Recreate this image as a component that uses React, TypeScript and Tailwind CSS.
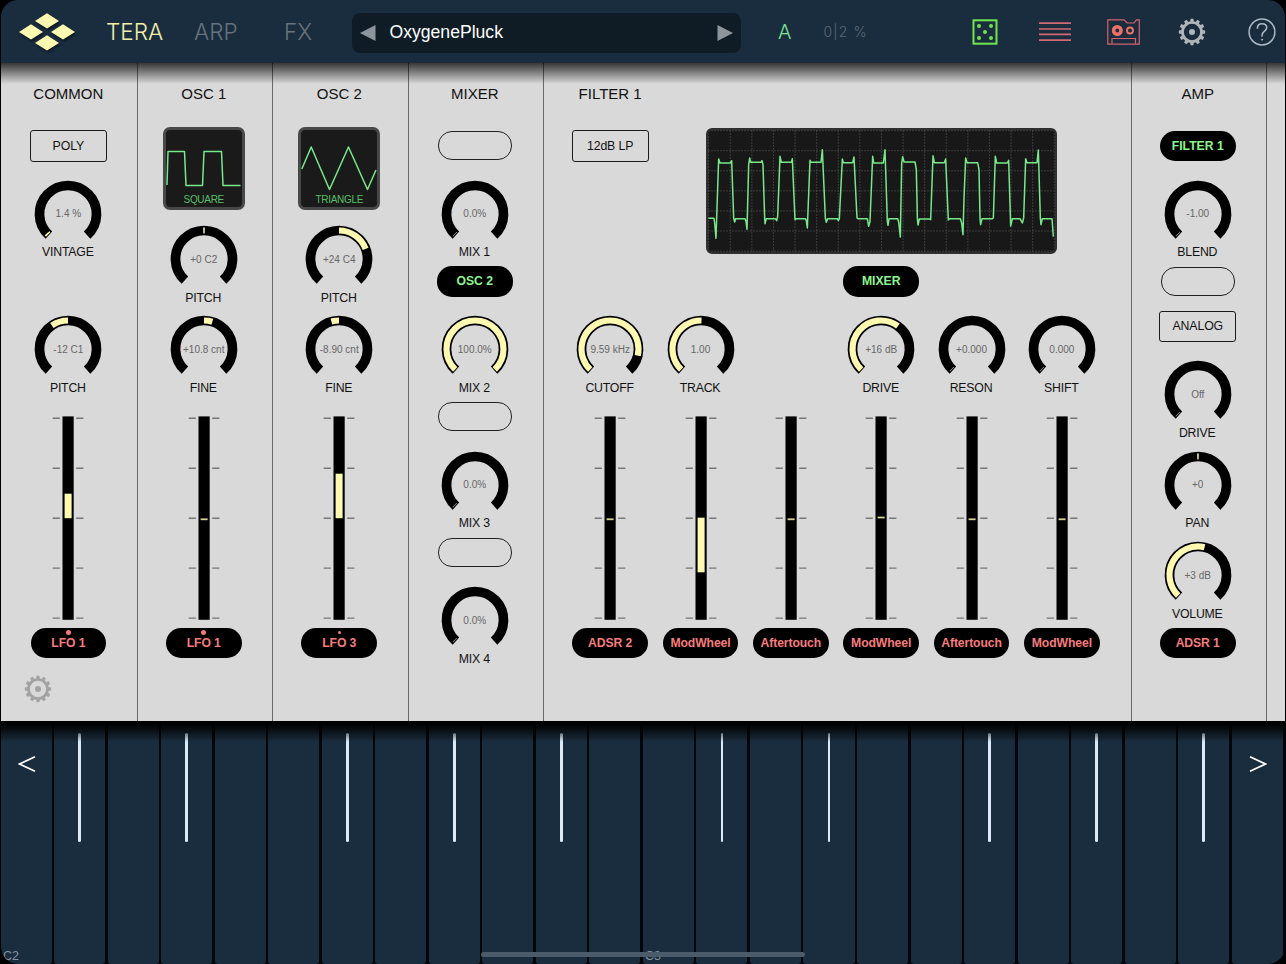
import { ReactNode } from "react";

const YELLOW = "#fdf9b0";
const GREEN = "#78e88a";
const MAX = 138;

const polar = (angle: number, r: number) => {
  const rad = (angle * Math.PI) / 180;
  return `${(35 + r * Math.sin(rad)).toFixed(2)} ${(35 - r * Math.cos(rad)).toFixed(2)}`;
};

const arc = (from: number, to: number, r = 28.5) =>
  `M${polar(from, r)}A${r} ${r} 0 ${to - from > 180 ? 1 : 0} 1 ${polar(to, r)}`;

type KnobProps = { label: string; value: string; from?: number; to?: number; empty?: boolean };

const Knob = ({ label, value, from = 0, to = 0, empty }: KnobProps) => (
  <div className="relative flex h-[90.35px] w-full shrink-0 flex-col items-center pt-[10.2px]">
    <svg className="shrink-0" width="70" height="70" viewBox="0 0 70 70" fill="none">
      <path d={arc(-MAX, MAX)} stroke="#000" strokeWidth="9.7" />
      {empty ? (
        <path d={arc(-135.8, -134.4)} stroke="#a5a59a" strokeWidth="6" />
      ) : (
        <path d={arc(from, to)} stroke={YELLOW} strokeWidth="6.2" />
      )}
    </svg>
    <span className="absolute top-[39px] left-0 w-full text-center text-[10px] leading-[14px] text-[#666]">{value}</span>
    <span className="-mt-[4.3px] shrink-0 pr-[1px] text-[12.3px] leading-[16px] tracking-[-0.2px]">{label}</span>
  </div>
);

const Slider = ({ top = 124.4, height = 1.8 }: { top?: number; height?: number }) => (
  <svg className="h-[225.85px] shrink-0" width="60" viewBox="0 0 60 225.85">
    {[24.2, 74.2, 124.2, 174.1, 224.1].map((y) => (
      <path key={y} d={`M14.7 ${y}h7.2M38.2 ${y}h7.2`} stroke="#777" strokeWidth="1.4" />
    ))}
    <rect x="24.5" y="22.4" width="11.2" height="203.4" fill="#000" />
    <rect x="26.6" y={top} width="7" height={height} fill={height < 3 ? "#d6d294" : YELLOW} />
  </svg>
);

const Cell = ({ children }: { children?: ReactNode }) => (
  <div className="flex h-[45.17px] w-full shrink-0 items-center justify-center">{children}</div>
);

const Pill = ({ children, red, dot }: { children: string; red?: boolean; dot?: "lg" | "sm" }) => (
  <Cell>
    <div
      className={`relative flex h-[30.4px] w-[75.6px] items-center justify-center rounded-[15px] bg-black text-[12.2px] font-bold ${
        red ? "tracking-[-0.1px] text-[#f67c7c]" : "text-[#8df58f]"
      }`}
    >
      {dot === "lg" && <i className="absolute top-[2.5px] left-[35.3px] size-[5px] rounded-full bg-[#f67c7c]" />}
      {dot === "sm" && <i className="absolute top-[3.5px] left-[36.3px] size-[3px] rounded-full bg-[#f67c7c]" />}
      <span className="relative">{children}</span>
    </div>
  </Cell>
);

const Slot = () => (
  <Cell>
    <div className="h-[29px] w-[74.4px] rounded-[14px] border-[1.3px] border-[#222]" />
  </Cell>
);

const BoxButton = ({ children }: { children: string }) => (
  <Cell>
    <div className="flex h-[31.7px] w-[77px] items-center justify-center rounded-[3px] border-[1.4px] border-[#1c1c1c] text-[12.3px] tracking-[-0.1px]">
      {children}
    </div>
  </Cell>
);

const Wave = ({ name, d }: { name: string; d: string }) => (
  <div className="flex h-[90.35px] w-full shrink-0 items-center justify-center">
    <div className="flex h-[82.4px] w-[82.4px] flex-col items-center rounded-[7px] border-[3px] border-[#484848] bg-[#1a1a1a]">
      <svg className="h-[63px]" width="76.4" viewBox="0 0 76.4 63" fill="none">
        <path d={d} stroke={GREEN} strokeWidth="1.5" strokeLinejoin="round" />
      </svg>
      <span className="text-[10px] leading-[13px] tracking-[-0.3px] text-[#58bf68]">{name}</span>
    </div>
  </div>
);

const Column = ({ title, first, children }: { title: string; first?: boolean; children: ReactNode }) => (
  <section
    className={`flex shrink-0 flex-col items-center border-r border-[#6a6a6a] ${
      first ? "w-[136.7px] pr-[1px]" : "w-[135.5px] pr-[2.4px]"
    }`}
  >
    <h2 className="flex h-[60.3px] shrink-0 items-center pt-[2.5px] text-[15px]">{title}</h2>
    {children}
  </section>
);

const Gear = ({ color }: { color: string }) => (
  <svg width="28" height="28" viewBox="-14 -14 28 28" fill="none">
    <circle r="9.5" stroke={color} strokeWidth="2.7" />
    {Array.from({ length: 12 }, (_, i) => (
      <path key={i} d="M-1.9 -10L-1.5 -13.2H1.5L1.9 -10Z" fill={color} transform={`rotate(${i * 30})`} />
    ))}
    <circle r="3" fill={color} />
  </svg>
);

// drawn in thirds of a pixel
const trace =
  "M7 271H24L26 285L30 331L34 210L38 93L42 105H73L77 98L83 270L86 282L89 272H117L120 280L123 304L128 110L131 90L134 103H165L168 98L171 110L176 270L177 287L181 272H208L212 278L215 265L222 85L226 103H256L259 92L267 275L270 272H298L301 278L304 300L312 97L315 103H345L349 65L358 270L361 283L365 272H394L397 278L400 272L409 93L412 104H440L444 87L453 270L456 272H484L488 295L492 280L500 85L503 105H532L537 65L544 280L546 292L549 272H575L578 282L583 327L587 105L590 86L594 102H627L631 125L634 270L636 291L640 273H671L674 275L681 83L685 104H715L719 93L727 276L731 272H763L767 285L771 320L774 210L779 90L783 104H815L819 125L822 270L824 290L828 272H859L862 270L868 85L872 105H904L908 97L914 294L919 272H942L949 285L953 270L959 92L963 104H993L997 66L1003 270L1005 290L1009 272H1038L1042 326";

const Scope = () => (
  <div className="h-[125.5px] w-[351px] overflow-hidden rounded-[6px] border-2 border-[#303030] bg-[#181818]">
    <svg width="347" height="121.5" viewBox="6 6 1041 364.5" fill="none">
      <g stroke="#4f4f4f" strokeWidth="3" strokeDasharray="4 5">
        {Array.from({ length: 17 }, (_, i) => (
          <path key={i} d={`M${8 + i * 64.8} 7V370`} />
        ))}
        {Array.from({ length: 7 }, (_, i) => (
          <path key={i} d={`M7 ${8 + i * 60.2}H1044`} />
        ))}
      </g>
      <path d={trace} stroke={GREEN} strokeWidth="4.5" strokeLinejoin="round" />
    </svg>
  </div>
);

const filterStrips = [
  { knob: { label: "CUTOFF", value: "9.59 kHz", from: -136, to: 103.5 }, source: "ADSR 2" },
  { knob: { label: "TRACK", value: "1.00", from: -136, to: 1 }, top: 123.7, height: 54.6, source: "ModWheel" },
  { source: "Aftertouch" },
  { knob: { label: "DRIVE", value: "+16 dB", from: -136, to: 36.5 }, top: 122.6, source: "ModWheel" },
  { knob: { label: "RESON", value: "+0.000", empty: true }, source: "Aftertouch" },
  { knob: { label: "SHIFT", value: "0.000", empty: true }, source: "ModWheel" },
];

const SHARPS = [1, 3, 6, 8, 10, 13, 15, 18, 20, 22];

const Header = () => (
  <header className="flex h-[63px] shrink-0 items-center bg-[#1a2d3f]">
    <svg className="ml-[18px] drop-shadow-[1px_2px_1px_rgba(0,0,0,.5)]" width="58" height="42" viewBox="0 0 58 42" fill={YELLOW}>
      <path d="M28 2.2L40 9.9L28 17.6L16 9.9Z" />
      <path d="M12 13.2L24 20.9L12 28.6L0 20.9Z" />
      <path d="M44 13.2L56 20.9L44 28.6L32 20.9Z" />
      <path d="M28 24.2L40 31.9L28 39.6L16 31.9Z" />
    </svg>
    <nav className="flex w-[275px] items-center pt-px pl-[29px] font-['Inter'] text-[22.5px] font-light">
      <span className="w-[88px] text-[#f2efaa]">TERA</span>
      <span className="w-[90px] text-[#66727d]">ARP</span>
      <span className="text-[#66727d]">FX</span>
    </nav>
    <div className="mt-[3px] flex h-[39.5px] w-[388.5px] items-center rounded-[8px] bg-[#0f1c26] pr-[8px] pl-[8px]">
      <svg width="16" height="16" viewBox="0 0 16 16" fill="#8d959c"><path d="M0 8L15.5 0V16Z" /></svg>
      <span className="flex-1 pb-[2px] pl-[13.5px] text-[17.6px] text-white">OxygenePluck</span>
      <svg width="16" height="16" viewBox="0 0 16 16" fill="#8d959c"><path d="M16 8L.5 0V16Z" /></svg>
    </div>
    <span className="w-[46px] pt-px pl-[37.5px] font-['Inter'] text-[20px] font-light text-[#7de590]">A</span>
    <span className="w-[187px] pl-[37px] font-['Inter'] text-[14px] font-light tracking-[1.1px] whitespace-nowrap text-[#5b6875]">0|2 %</span>
    <svg className="ml-[-1.5px] shrink-0" width="26" height="26" viewBox="0 0 26 26" fill="none">
      <rect x="1.5" y="1.3" width="23" height="23.4" stroke="#72e350" strokeWidth="2" />
      {[[7, 7], [19, 7], [13, 13], [7, 19], [19, 19]].map(([x, y]) => (
        <circle key={`${x}-${y}`} cx={x} cy={y} r="2" fill="#72e350" />
      ))}
    </svg>
    <svg className="ml-[41px] shrink-0" width="32" height="26" viewBox="0 0 32 26">
      <path d="M0 4.2H32M0 10H32M0 15.4H32M0 21.1H32" stroke="#d26a70" strokeWidth="1.7" />
    </svg>
    <svg className="ml-[36px] shrink-0" width="33" height="26" viewBox="0 0 33 26" fill="none" stroke="#d4616d">
      <path d="M.8 .8H17L20.2 4H27L29.5 .8H32.3V25.2H.8Z" strokeWidth="1.2" />
      <path d="M5 25V19.5H28.5V25" strokeWidth="1.2" />
      <circle cx="10.3" cy="11.5" r="3.7" stroke="#ed7068" strokeWidth="3.6" />
      <circle cx="23" cy="11.5" r="3" stroke="#ed7068" strokeWidth="1.9" />
    </svg>
    <div className="ml-[38px] shrink-0"><Gear color="#b0b5b9" /></div>
    <svg className="ml-[41.5px] shrink-0" width="28" height="28" viewBox="0 0 28 28" fill="none" stroke="#abb7c2" strokeLinecap="round">
      <circle cx="14" cy="14" r="12.9" strokeWidth="1.5" />
      <path d="M9.4 10.2C9.4 7.3 11.3 5.7 14 5.7C16.8 5.7 18.7 7.4 18.7 9.8C18.7 13 14 13.5 14 17.4V18" strokeWidth="1.6" />
      <circle cx="14" cy="21.7" r=".6" strokeWidth="1" />
    </svg>
  </header>
);

const Keyboard = () => (
  <div className="relative h-[243px] shrink-0 overflow-hidden rounded-b-[16px] bg-[#020509]">
    <div className="-ml-[0.5px] flex h-full w-[1282.2px] gap-[2.5px]">
      {Array.from({ length: 24 }, (_, i) => (
        <div key={i} className="flex flex-1 justify-center rounded-b-[3px] bg-[#1a2d3e] pt-[12px]">
          {SHARPS.includes(i) && <div className="h-[109px] w-[2.8px] rounded-full bg-[#dbeaf6]" />}
        </div>
      ))}
    </div>
    <div className="absolute inset-x-0 top-0 h-[21px] bg-linear-to-b from-black from-15% to-transparent" />
    <svg className="absolute top-[35px] left-[17px]" width="18" height="17" viewBox="0 0 18 17" fill="none">
      <path d="M17 .8L1.5 8L17 15.2" stroke="#fff" strokeWidth="1.8" />
    </svg>
    <svg className="absolute top-[35px] right-[18px]" width="18" height="17" viewBox="0 0 18 17" fill="none">
      <path d="M1 .8L16.5 8L1 15.2" stroke="#fff" strokeWidth="1.8" />
    </svg>
    <span className="absolute bottom-0 left-[2px] text-[12.5px] leading-[16px] text-[#8493a1]">C2</span>
    <span className="absolute bottom-0 left-[644px] text-[12.5px] leading-[16px] text-[#8493a1]">C3</span>
    <div className="absolute bottom-[7px] left-[480px] h-[5px] w-[324px] rounded-full bg-[#4b5b69]" />
  </div>
);

export default function App() {
  return (
    <div className="h-[964px] w-[1286px] overflow-hidden bg-black px-px font-['Liberation_Sans',sans-serif] text-[#111]">
      <div className="flex h-full flex-col overflow-hidden rounded-[17px]">
        <Header />

        <main className="relative flex h-[658px] shrink-0 bg-[#d9d9d9]">
          <Column title="COMMON" first>
            <BoxButton>POLY</BoxButton>
            <Knob label="VINTAGE" value="1.4 %" from={-136} to={-132.5} />
            <Cell />
            <Knob label="PITCH" value="-12 C1" from={-34.5} to={0} />
            <Slider top={99.7} height={24.5} />
            <Pill red dot="lg">LFO 1</Pill>
            <div className="flex h-[45.17px] w-full items-center pt-[2px] pl-[23px]">
              <Gear color="#a3a3a3" />
            </div>
          </Column>

          <Column title="OSC 1">
            <Wave name="SQUARE" d="M1 55L2 21.5H18.5L20 55.5H36.5L38 21.5H55.5L57 55.5H74.5" />
            <Knob label="PITCH" value="+0 C2" from={-1.5} to={1.5} />
            <Knob label="FINE" value="+10.8 cnt" from={0} to={17} />
            <Slider />
            <Pill red dot="lg">LFO 1</Pill>
          </Column>

          <Column title="OSC 2">
            <Wave name="TRIANGLE" d="M.8 39L10.2 17L28.5 59.5L47.5 17L66.5 59.5L75 40" />
            <Knob label="PITCH" value="+24 C4" from={0} to={69} />
            <Knob label="FINE" value="-8.90 cnt" from={-15.5} to={0} />
            <Slider top={79.7} height={44.5} />
            <Pill red dot="sm">LFO 3</Pill>
          </Column>

          <Column title="MIXER">
            <Slot />
            <Knob label="MIX 1" value="0.0%" empty />
            <Pill>OSC 2</Pill>
            <Knob label="MIX 2" value="100.0%" from={-136} to={136} />
            <Slot />
            <Knob label="MIX 3" value="0.0%" empty />
            <Slot />
            <Knob label="MIX 4" value="0.0%" empty />
          </Column>

          <section className="flex w-[587.5px] shrink-0 flex-col border-r border-[#6a6a6a] pl-[20.8px]">
            <h2 className="flex h-[60.3px] w-[90.35px] shrink-0 items-center justify-center pt-[2.5px] text-[15px]">FILTER 1</h2>
            <div className="flex">
              <div className="w-[90.35px]">
                <BoxButton>12dB LP</BoxButton>
              </div>
              <div className="flex w-[451.75px] flex-col items-center">
                <div className="flex h-[135.5px] items-center">
                  <Scope />
                </div>
                <Pill>MIXER</Pill>
              </div>
            </div>
            <div className="flex">
              {filterStrips.map((strip, i) => (
                <div key={i} className="flex w-[90.35px] flex-col items-center">
                  {strip.knob ? <Knob {...strip.knob} /> : <div className="h-[90.35px]" />}
                  <Slider top={strip.top} height={strip.height} />
                  <Pill red>{strip.source}</Pill>
                </div>
              ))}
            </div>
          </section>

          <Column title="AMP">
            <Pill>FILTER 1</Pill>
            <Knob label="BLEND" value="-1.00" empty />
            <Slot />
            <BoxButton>ANALOG</BoxButton>
            <Knob label="DRIVE" value="Off" empty />
            <Knob label="PAN" value="+0" from={-1.5} to={1.5} />
            <Knob label="VOLUME" value="+3 dB" from={-136} to={13.3} />
            <Pill red>ADSR 1</Pill>
          </Column>

          <div className="absolute inset-x-0 top-0 h-[21px] bg-linear-to-b from-black/75 to-transparent" />
        </main>

        <Keyboard />
      </div>
    </div>
  );
}
